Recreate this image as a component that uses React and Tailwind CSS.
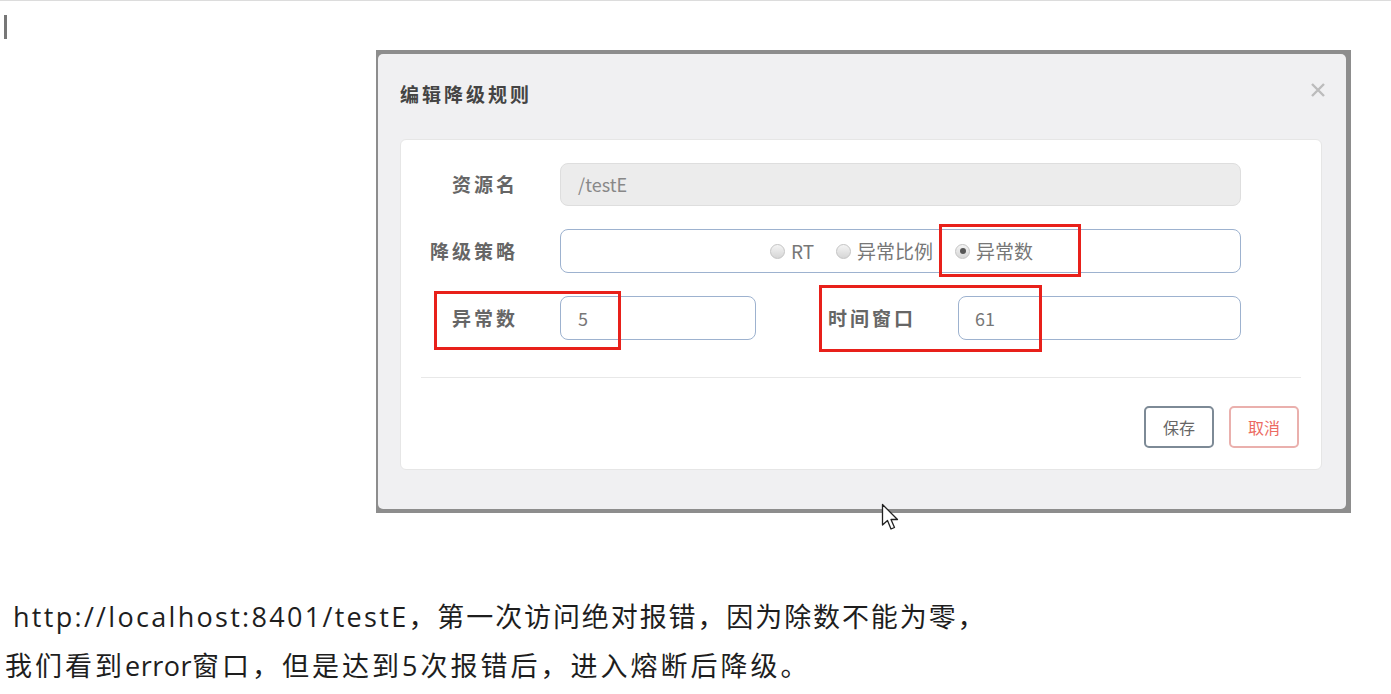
import React from 'react';

const cjk = { fontFamily: '"Noto Sans CJK SC", "Liberation Sans", sans-serif' };
const note = { fontFamily: '"Open Sans", "Noto Sans CJK SC", sans-serif' };

function Radio({ checked, label }) {
    return (
        <label className="flex items-center gap-[6px]">
            <span className="w-[15px] h-[15px] rounded-full border border-[#c4c4c4] bg-gradient-to-b from-[#f4f4f4] to-[#d6d6d6] flex items-center justify-center">
                {checked && <span className="w-[6px] h-[6px] rounded-full bg-[#555]" />}
            </span>
            <span className="text-[19px] text-[#777]">{label}</span>
        </label>
    );
}

function RedBox({ className }) {
    return <div className={`absolute border-[3px] border-[#e8201a] ${className}`} />;
}

export default function App() {
    return (
        <div className="relative w-[1391px] h-[694px] bg-white overflow-hidden border-t border-[#dcdcdc]" style={cjk}>
            {/* text caret */}
            <div className="absolute left-[4px] top-[14px] w-[3px] h-[24px] bg-[#777]" />

            <div className="pt-[49px] pl-[376px]">
                <div className="w-[975px] h-[463px] border-t-[4px] border-r-[5px] border-b-[4px] border-l-[2px] border-[#8d8d8d] bg-[#8d8d8d]">
                    <div className="h-full rounded-[5px] bg-[#f0f0f2] flex flex-col">
                        <div className="h-[85px] flex items-center justify-between pl-[22px] pr-[20px]">
                            <h3 className="text-[19px] font-bold text-[#444] tracking-[3px] pb-[4px]">编辑降级规则</h3>
                            <svg width="16" height="16" viewBox="0 0 16 16" className="mb-[14px]">
                                <path d="M2 2 L14 14 M14 2 L2 14" stroke="#bcbcbc" strokeWidth="2.4" />
                            </svg>
                        </div>

                        <div className="ml-[22px] mr-[24px] h-[331px] bg-white rounded-[6px] border border-[#e6e6e6] flex flex-col">
                            <div className="pt-[23px] pr-[80px] flex flex-col gap-[23px]">
                                <div className="flex items-center">
                                    <span className="w-[117px] text-right text-[19px] font-bold text-[#666] tracking-[3px] -mr-[3px]">资源名</span>
                                    <div className="ml-[45px] flex-1 h-[43px] rounded-[8px] bg-[#ececec] border border-[#dedede] flex items-center px-[17px] text-[18px] text-[#888]">
                                        /testE
                                    </div>
                                </div>
                                <div className="flex items-center">
                                    <span className="w-[117px] text-right text-[19px] font-bold text-[#666] tracking-[3px] -mr-[3px]">降级策略</span>
                                    <div className="ml-[45px] flex-1 h-[44px] rounded-[8px] bg-white border border-[#9db2cf] flex items-center justify-center gap-[22px] pl-[2px]">
                                        <Radio label="RT" />
                                        <Radio label="异常比例" />
                                        <Radio label="异常数" checked />
                                    </div>
                                </div>
                                <div className="flex items-center">
                                    <span className="w-[117px] text-right text-[19px] font-bold text-[#666] tracking-[3px] -mr-[3px]">异常数</span>
                                    <div className="ml-[45px] w-[196px] h-[44px] rounded-[8px] bg-white border border-[#9db2cf] flex items-center px-[17px] text-[18px] text-[#777]">
                                        5
                                    </div>
                                    <span className="ml-[60px] w-[100px] text-right text-[19px] font-bold text-[#666] tracking-[3px] -mr-[3px]">时间窗口</span>
                                    <div className="ml-[45px] flex-1 h-[44px] rounded-[8px] bg-white border border-[#9db2cf] flex items-center px-[16px] text-[18px] text-[#777]">
                                        61
                                    </div>
                                </div>
                            </div>

                            <div className="mt-[37px] mx-[20px] border-t border-[#e8e8e8]" />

                            <div className="mt-[28px] pr-[22px] flex justify-end gap-[15px]">
                                <button className="w-[70px] h-[42px] rounded-[5px] border-2 border-[#7d8a96] bg-white text-[16px] text-[#666]">保存</button>
                                <button className="w-[70px] h-[42px] rounded-[5px] border-2 border-[#eab0ad] bg-white text-[16px] text-[#ec6a62]">取消</button>
                            </div>
                        </div>
                    </div>
                </div>
            </div>

            {/* annotations */}
            <RedBox className="left-[939px] top-[223px] w-[142px] h-[53px]" />
            <RedBox className="left-[434px] top-[290px] w-[187px] h-[59px]" />
            <RedBox className="left-[819px] top-[284px] w-[223px] h-[67px]" />

            {/* mouse pointer */}
            <svg className="absolute left-[881px] top-[502px]" width="20" height="30" viewBox="0 0 20 30">
                <path d="M1.5 1.5 L1.5 22 L6.5 17.5 L10 26 L13.5 24.5 L10 16.5 L16.5 16.5 Z" fill="#fff" stroke="#222" strokeWidth="1.3" strokeLinejoin="round" />
            </svg>

            <div className="mt-[79px] pl-[5px] text-[27px] leading-[49px] text-[#1e1e1e] whitespace-nowrap" style={note}>
                <p className="pl-[8px]">
                    <span className="tracking-[2.3px]">http://localhost:8401/testE</span>
                    <span className="tracking-[1.9px]">，第一次访问绝对报错，因为除数不能为零，</span>
                </p>
                <p className="tracking-[3px]">
                    我们看到<span className="tracking-[0.5px]">error</span>窗口，但是达到5次报错后，进入熔断后降级。
                </p>
            </div>
        </div>
    );
}
